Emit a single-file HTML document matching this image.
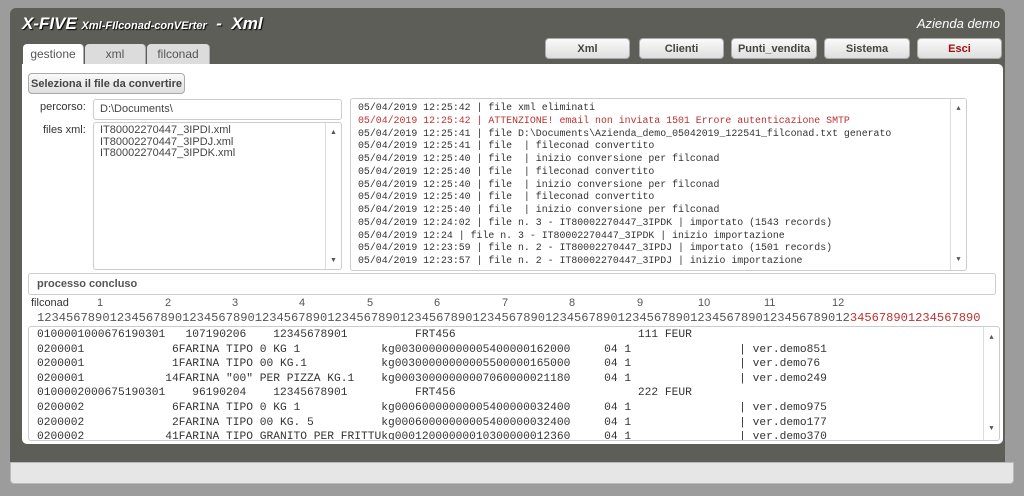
<!DOCTYPE html>
<html><head><meta charset="utf-8"><style>
*{box-sizing:border-box;margin:0;padding:0}
body{width:1024px;height:496px;background:#9c9c9c;position:relative;overflow:hidden;font-family:"Liberation Sans",sans-serif}
.a{position:absolute}
.dark{left:10px;top:8px;width:995px;height:454px;background:#5e5e59;border-radius:6px 6px 0 0}
.foot{left:10px;top:462px;width:1004px;height:22px;background:#e6e6e6;border-radius:0 0 4px 4px;border:1px solid #bbb}
.white{left:22px;top:64px;width:981px;height:380px;background:#fff;border-radius:0 5px 5px 5px}
.tab{top:44px;height:20px;font-size:12px;color:#555;text-align:center;line-height:20px;background:#dcdcdc;border-radius:4px 4px 0 0;border-right:1px solid #aaa}
.btn{top:38px;height:21px;font-size:11px;font-weight:bold;color:#444;text-align:center;line-height:20px;background:linear-gradient(#fafafa,#dedede);border:1px solid #aaa;border-radius:4px}
.box{background:#fff;border:1px solid #ccc;border-radius:3px}
.mono{font-family:"Liberation Mono",monospace;white-space:pre;color:#333}
.lbl{font-size:11px;color:#333}
.n{position:absolute;top:297px;font-size:11px;color:#555}
.sb{position:absolute;right:0;top:0;bottom:0;width:16px;border-left:1px solid #ddd;font-size:7px;color:#555;text-align:center}
</style></head><body>
<div class="a dark"></div>
<div class="a foot"></div>
<div class="a" style="left:22px;top:14px;color:#fff;font-style:italic;font-weight:bold;font-size:17px;text-shadow:1px 1px 1px #000">X-FIVE <span style="font-size:11px">Xml-FIlconad-conVErter</span> &nbsp;- &nbsp;Xml</div>
<div class="a" style="right:24px;top:16px;color:#fff;font-style:italic;font-size:13px">Azienda demo</div>
<div class="a tab" style="left:23px;width:61px;background:#fff;color:#555">gestione</div>
<div class="a tab" style="left:85px;width:61px">xml</div>
<div class="a tab" style="left:147px;width:63px">filconad</div>
<div class="a btn" style="left:545px;width:85px">Xml</div>
<div class="a btn" style="left:639px;width:85px">Clienti</div>
<div class="a btn" style="left:731px;width:86px">Punti_vendita</div>
<div class="a btn" style="left:824px;width:86px">Sistema</div>
<div class="a btn" style="left:917px;width:85px;color:#a01010">Esci</div>
<div class="a white"></div>
<div class="a btn" style="left:28px;top:73px;width:157px;height:21px">Seleziona il file da convertire</div>
<div class="a lbl" style="left:40px;top:101px">percorso:</div>
<div class="a lbl" style="left:43px;top:124px">files xml:</div>
<div class="a box lbl" style="left:93px;top:99px;width:249px;height:21px;padding:3px 6px;color:#444">D:\Documents\</div>
<div class="a box lbl" style="left:93px;top:122px;width:249px;height:148px;padding:2px 6px;line-height:11.5px;color:#444">IT80002270447_3IPDI.xml<br>IT80002270447_3IPDJ.xml<br>IT80002270447_3IPDK.xml<div class="sb"><div style="margin-top:4px">▲</div><div style="position:absolute;bottom:3px;width:100%">▼</div></div></div>
<div class="a box mono" style="left:350px;top:98px;width:617px;height:173px;padding:3px 7px;font-size:9.9px;line-height:12.75px">05/04/2019 12:25:42 | file xml eliminati
<span style="color:#c03030">05/04/2019 12:25:42 | ATTENZIONE! email non inviata 1501 Errore autenticazione SMTP</span>
05/04/2019 12:25:41 | file D:\Documents\Azienda_demo_05042019_122541_filconad.txt generato
05/04/2019 12:25:41 | file  | fileconad convertito
05/04/2019 12:25:40 | file  | inizio conversione per filconad
05/04/2019 12:25:40 | file  | fileconad convertito
05/04/2019 12:25:40 | file  | inizio conversione per filconad
05/04/2019 12:25:40 | file  | fileconad convertito
05/04/2019 12:25:40 | file  | inizio conversione per filconad
05/04/2019 12:24:02 | file n. 3 - IT80002270447_3IPDK | importato (1543 records)
05/04/2019 12:24 | file n. 3 - IT80002270447_3IPDK | inizio importazione
05/04/2019 12:23:59 | file n. 2 - IT80002270447_3IPDJ | importato (1501 records)
05/04/2019 12:23:57 | file n. 2 - IT80002270447_3IPDJ | inizio importazione<div class="sb"><div style="margin-top:4px">▲</div><div style="position:absolute;bottom:3px;width:100%">▼</div></div></div>
<div class="a box" style="left:28px;top:273px;width:968px;height:22px;padding:4px 8px;font-size:11px;font-weight:bold;color:#555">processo concluso</div>
<div class="a lbl" style="left:31px;top:297px">filconad</div>
<span class="n" style="left:97px">1</span><span class="n" style="left:165px">2</span><span class="n" style="left:232px">3</span><span class="n" style="left:299px">4</span><span class="n" style="left:367px">5</span><span class="n" style="left:434px">6</span><span class="n" style="left:502px">7</span><span class="n" style="left:569px">8</span><span class="n" style="left:637px">9</span><span class="n" style="left:698px">10</span><span class="n" style="left:764px">11</span><span class="n" style="left:832px">12</span>
<div class="a mono" style="left:37px;top:311px;font-size:12.1px;color:#555">1234567890123456789012345678901234567890123456789012345678901234567890123456789012345678901234567890123456789012<span style="color:#c03030">345678901234567890</span></div>
<div class="a box mono" style="left:28px;top:326px;width:972px;height:115px;padding:1px 8px;font-size:11.25px;line-height:14.6px;overflow:hidden">0100001000676190301   107190206    12345678901          FRT456                           111 FEUR
0200001             6FARINA TIPO 0 KG 1            kg00300000000005400000162000     04 1                | ver.demo851
0200001             1FARINA TIPO 00 KG.1           kg00300000000005500000165000     04 1                | ver.demo76
0200001            14FARINA "00" PER PIZZA KG.1    kg00030000000007060000021180     04 1                | ver.demo249
0100002000675190301    96190204    12345678901          FRT456                           222 FEUR
0200002             6FARINA TIPO 0 KG 1            kg00060000000005400000032400     04 1                | ver.demo975
0200002             2FARINA TIPO 00 KG. 5          kg00060000000005400000032400     04 1                | ver.demo177
0200002            41FARINA TIPO GRANITO PER FRITTUkg00012000000010300000012360     04 1                | ver.demo370<div class="sb"><div style="margin-top:4px">▲</div><div style="position:absolute;bottom:3px;width:100%">▼</div></div></div>
</body></html>
